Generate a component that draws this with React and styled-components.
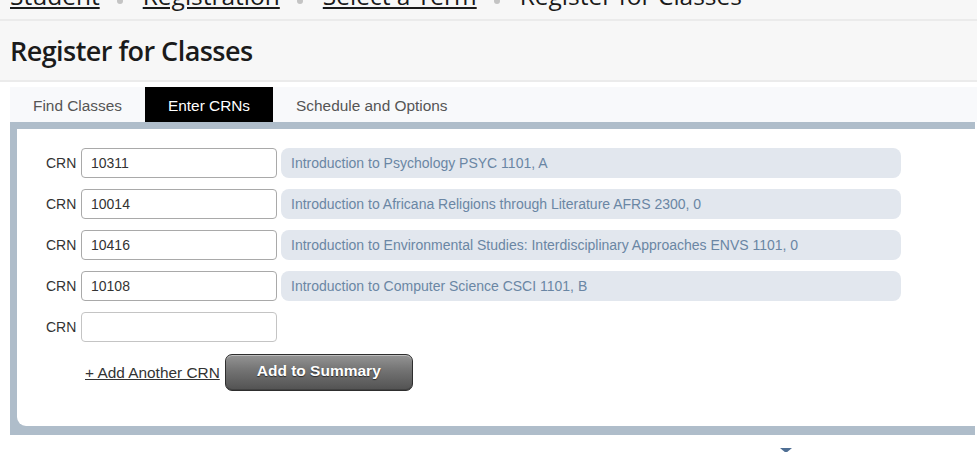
import React, { useState } from "react";
import styled, { createGlobalStyle } from "styled-components";

const GlobalStyle = createGlobalStyle`
  html, body {
    margin: 0;
    padding: 0;
    background: #ffffff;
  }
  body {
    font-family: "Liberation Sans", Arial, sans-serif;
    color: #333;
    overflow: hidden;
  }
`;

const crumbs = ["Student", "Registration", "Select a Term"];

const tabs = ["Find Classes", "Enter CRNs", "Schedule and Options"];

const initialRows = [
  { crn: "10311", title: "Introduction to Psychology PSYC 1101, A" },
  {
    crn: "10014",
    title: "Introduction to Africana Religions through Literature AFRS 2300, 0",
  },
  {
    crn: "10416",
    title:
      "Introduction to Environmental Studies: Interdisciplinary Approaches ENVS 1101, 0",
  },
  { crn: "10108", title: "Introduction to Computer Science CSCI 1101, B" },
  { crn: "", title: "" },
];

const App = () => {
  const [activeTab, setActiveTab] = useState("Enter CRNs");
  const [rows, setRows] = useState(initialRows);

  const updateCrn = (index, value) => {
    setRows(rows.map((r, i) => (i === index ? { ...r, crn: value } : r)));
  };

  const addRow = (e) => {
    e.preventDefault();
    setRows([...rows, { crn: "", title: "" }]);
  };

  return (
    <Page>
      <GlobalStyle />
      <Header>
        <Breadcrumbs>
          <CrumbLine>
            {crumbs.map((c) => (
              <React.Fragment key={c}>
                <CrumbLink href="#">{c}</CrumbLink>
                <CrumbDot />
              </React.Fragment>
            ))}
            <CrumbCurrent>Register for Classes</CrumbCurrent>
          </CrumbLine>
        </Breadcrumbs>
        <TitleBar>
          <Title>Register for Classes</Title>
        </TitleBar>
      </Header>

      <Main>
        <TabBar>
          {tabs.map((t) => (
            <Tab key={t} active={activeTab === t} onClick={() => setActiveTab(t)}>
              {t}
            </Tab>
          ))}
        </TabBar>
        <Frame>
          <Panel>
            <Rows>
              {rows.map((r, i) => (
                <Row key={i}>
                  <Label>CRN</Label>
                  <CrnInput
                    value={r.crn}
                    focused={i === rows.length - 1}
                    onChange={(e) => updateCrn(i, e.target.value)}
                    autoFocus={i === rows.length - 1}
                  />
                  {r.title && <CourseInfo>{r.title}</CourseInfo>}
                </Row>
              ))}
            </Rows>
            <Actions>
              <AddLink href="#" onClick={addRow}>
                + Add Another CRN
              </AddLink>
              <SummaryButton>Add to Summary</SummaryButton>
            </Actions>
          </Panel>
        </Frame>
        <Footer>
          <Caret />
        </Footer>
      </Main>
    </Page>
  );
};

const Page = styled.div`
  width: 977px;
  height: 452px;
  overflow: hidden;
  background: #ffffff;
`;

const Header = styled.div`
  background: #f7f7f7;
`;

const Breadcrumbs = styled.div`
  height: 19px;
  overflow: hidden;
  border-bottom: 2px solid #ebebeb;
`;

const CrumbLine = styled.div`
  display: flex;
  align-items: flex-start;
  margin-top: -19px;
  padding-left: 10px;
  height: 30px;
  font-family: "Open Sans", "Noto Sans", sans-serif;
  font-size: 24.5px;
  line-height: 30px;
  color: #1a1a1a;
  white-space: nowrap;
`;

const CrumbLink = styled.a`
  color: #1a1a1a;
  text-decoration: underline;
  text-underline-offset: 2px;
`;

const CrumbDot = styled.span`
  flex: none;
  width: 6px;
  height: 6px;
  border-radius: 50%;
  background: #c4c4c4;
  margin: 17px 20px 0 17px;
`;

const CrumbCurrent = styled.span`
  color: #1a1a1a;
`;

const TitleBar = styled.div`
  height: 59px;
  border-bottom: 2px solid #ebebeb;
  padding-left: 10px;
  display: flex;
  align-items: center;
`;

const Title = styled.h1`
  margin: 0;
  font-family: "Open Sans", "Noto Sans", sans-serif;
  font-weight: 600;
  font-size: 27px;
  letter-spacing: -0.55px;
  color: #1b1b1b;
`;

const Main = styled.div`
  padding-top: 5px;
  padding-left: 10px;
`;

const TabBar = styled.div`
  display: flex;
  height: 35px;
  background: #f8f9fb;
`;

const Tab = styled.div`
  display: flex;
  align-items: center;
  padding: 2px 23px 0 23px;
  font-size: 15.4px;
  cursor: pointer;
  color: ${(p) => (p.active ? "#ffffff" : "#555555")};
  background: ${(p) => (p.active ? "#000000" : "transparent")};
`;

const Frame = styled.div`
  margin-right: 2px;
  background: #afbdca;
  padding: 7px 0 9px 7px;
`;

const Panel = styled.div`
  background: #ffffff;
  border-bottom-left-radius: 9px;
  padding: 19px 0 35px 29px;
`;

const Rows = styled.div`
  display: flex;
  flex-direction: column;
  gap: 11px;
`;

const Row = styled.div`
  display: flex;
  align-items: center;
  height: 30px;
`;

const Label = styled.label`
  width: 35px;
  font-size: 14px;
  color: #333;
`;

const CrnInput = styled.input`
  box-sizing: border-box;
  width: 196px;
  height: 30px;
  border: 1px solid ${(p) => (p.focused ? "#c4c4c4" : "#a9a9a9")};
  border-radius: 4px;
  padding: 0 9px;
  font-family: "Liberation Sans", Arial, sans-serif;
  font-size: 14px;
  color: #333;
  caret-color: #333;
  outline: none;
  background: #fff;
`;

const CourseInfo = styled.div`
  box-sizing: border-box;
  margin-left: 4px;
  width: 620px;
  height: 30px;
  display: flex;
  align-items: center;
  padding-left: 10px;
  border-radius: 8px;
  background: #e2e7ee;
  color: #6a86a4;
  font-size: 14px;
  white-space: nowrap;
`;

const Actions = styled.div`
  display: flex;
  align-items: center;
  margin-top: 12px;
  padding-left: 39px;
  gap: 5px;
`;

const AddLink = styled.a`
  font-size: 15.4px;
  color: #333;
  text-decoration: underline;
`;

const SummaryButton = styled.button`
  width: 188px;
  height: 37px;
  border: 1px solid #2e2e2e;
  border-radius: 7px;
  background: linear-gradient(#949494 0%, #727272 45%, #525252 100%);
  box-shadow: inset 0 1px 0 rgba(255, 255, 255, 0.4),
    inset 0 -1px 0 rgba(0, 0, 0, 0.2);
  color: #ffffff;
  font-family: "Liberation Sans", Arial, sans-serif;
  font-weight: 700;
  font-size: 15.5px;
  text-shadow: 0 1px 1px rgba(0, 0, 0, 0.6);
  padding: 0 0 3px;
  cursor: pointer;
`;

const Footer = styled.div`
  height: 18px;
  display: flex;
  align-items: flex-end;
  padding-left: 770px;
`;

const Caret = styled.span`
  width: 0;
  height: 0;
  border-left: 6px solid transparent;
  border-right: 6px solid transparent;
  border-top: 5px solid #4f6f94;
`;

export default App;
